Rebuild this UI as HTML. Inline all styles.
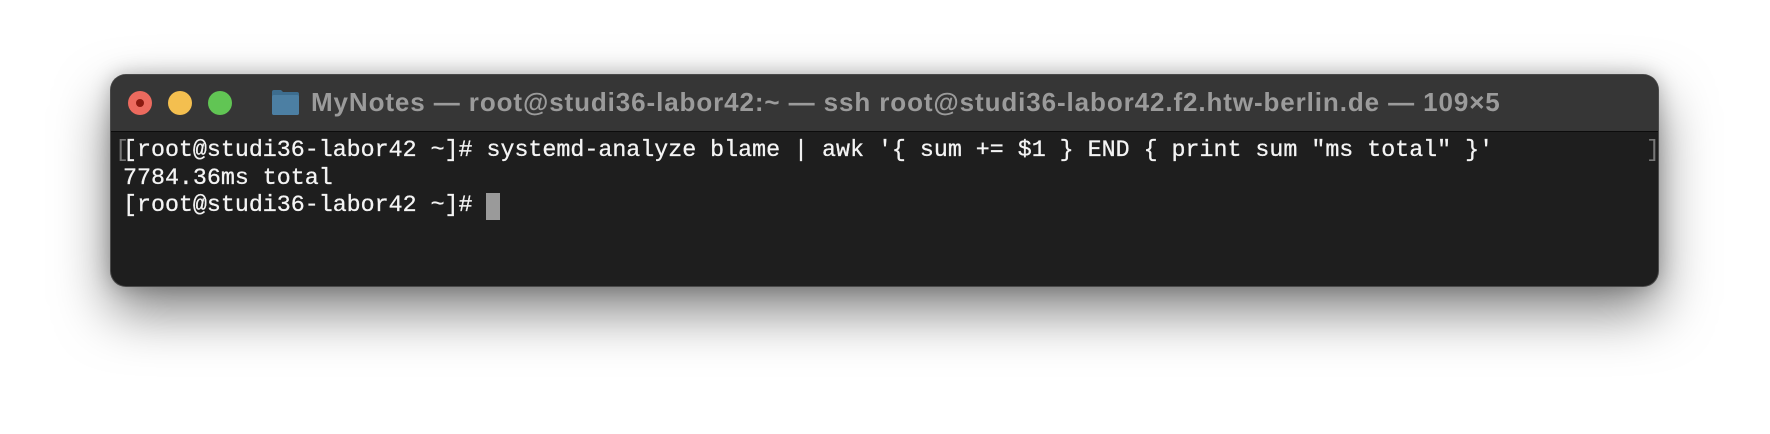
<!DOCTYPE html>
<html><head><style>
html,body{margin:0;padding:0;background:#fff;width:1770px;height:434px;overflow:hidden}
.win{position:absolute;left:111px;top:75px;width:1547px;height:211px;border-radius:15px;background:#1e1e1e;box-shadow:0 0 0 1px #4a4a4a,0 25px 55px rgba(0,0,0,.5),0 0 20px rgba(0,0,0,.25);overflow:hidden}
.tb{position:absolute;left:0;top:0;right:0;height:56px;background:#363636;border-bottom:1px solid #0c0c0c}
.l{position:absolute;top:16px;width:24px;height:24px;border-radius:50%}
.title{position:absolute;left:200px;top:12px;font:bold 26px "Liberation Sans",sans-serif;color:#9b9b9b;white-space:nowrap;letter-spacing:0.9px}
.t{position:absolute;font:23.3px/27.5px "Liberation Mono",monospace;color:#f4f4f4;white-space:pre;-webkit-text-stroke:0.3px #f4f4f4}
</style></head><body>
<div class="win">
 <div class="tb">
  <div class="l" style="left:17px;background:#ec6a5e"><div style="position:absolute;left:8px;top:8px;width:8px;height:8px;border-radius:50%;background:#8c1a10"></div></div>
  <div class="l" style="left:57px;background:#f4bf4f"></div>
  <div class="l" style="left:97px;background:#61c554"></div>
  <svg style="position:absolute;left:160px;top:14px" width="29" height="27" viewBox="0 0 29 27"><path d="M1 3 Q1 1 3 1 H10 L12 3 H26 Q28 3 28 5 V24 Q28 26 26 26 H3 Q1 26 1 24Z" fill="#3d6d8f"/><rect x="1" y="6" width="27" height="20" rx="2" fill="#4c7fa3"/></svg>
  <div class="title">MyNotes — root@studi36-labor42:~ — ssh root@studi36-labor42.f2.htw-berlin.de — 109×5</div>
 </div>
 <div class="t" style="left:4px;top:62px;color:#777;-webkit-text-stroke:0">[</div>
 <div class="t" style="left:12px;top:62px">[root@studi36-labor42 ~]# systemd-analyze blame | awk '{ sum += $1 } END { print sum "ms total" }'
7784.36ms total
[root@studi36-labor42 ~]# </div>
 <div class="t" style="left:1535px;top:62px;color:#777;-webkit-text-stroke:0">]</div>
 <div style="position:absolute;left:375px;top:118px;width:14px;height:27px;background:#9a9a9a"></div>
</div>
</body></html>
